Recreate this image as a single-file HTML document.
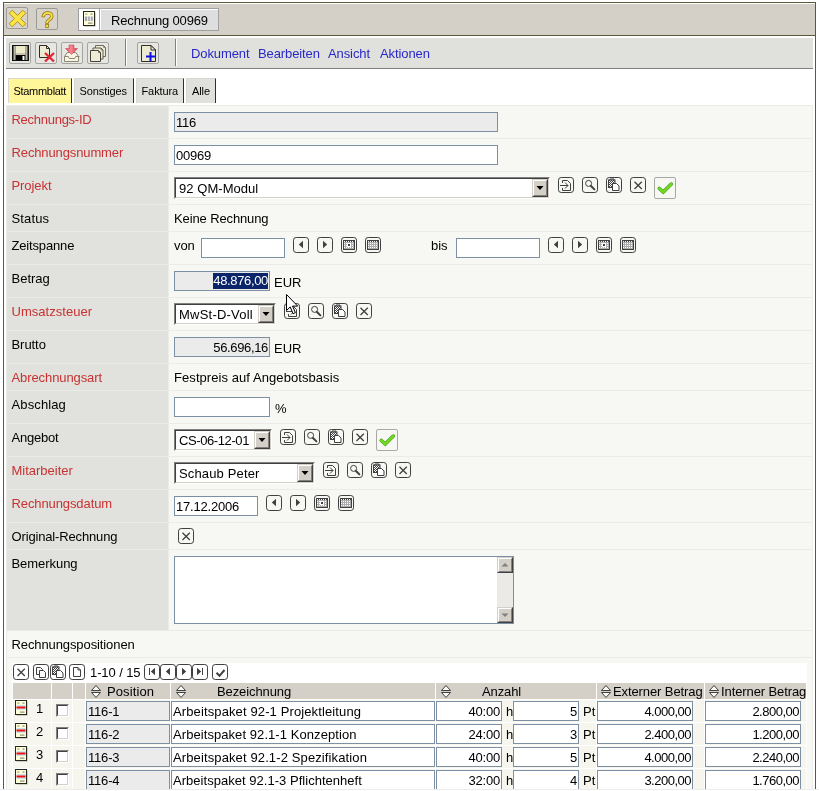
<!DOCTYPE html>
<html lang="de"><head><meta charset="utf-8"><title>Rechnung 00969</title>
<style>
html,body{margin:0;padding:0;background:#fff;}
body{width:819px;height:791px;overflow:hidden;position:relative;font-family:"Liberation Sans",sans-serif;font-size:13px;color:#000;}
div,svg{position:absolute;box-sizing:border-box;}
svg{overflow:visible;}
.t{white-space:nowrap;}
</style></head><body><div id="w" style="left:0;top:0;width:819px;height:791px;will-change:transform">
<svg width="0" height="0" style="left:0;top:0"><defs>
<pattern id="dz" width="2" height="2" patternUnits="userSpaceOnUse"><rect width="2" height="2" fill="#fff"/><rect width="1" height="1" fill="#404040"/><rect x="1" y="1" width="1" height="1" fill="#404040"/></pattern>
<pattern id="cg" x="3.500" y="4.500" width="2" height="2" patternUnits="userSpaceOnUse"><rect width="2" height="2" fill="#404040"/><rect x=".5" y=".5" width="1" height="1" fill="#fff"/></pattern>
</defs></svg>
<div style="left:3px;top:2px;width:813px;height:787px;border:1px solid #5a583e;border-bottom:none;background:#fff"></div>
<div style="left:0px;top:789px;width:819px;height:1px;background:#e4e4e4;"></div>
<div style="left:4px;top:3px;width:811px;height:32px;background:#d4d0c8;border-top:1px solid #fff;"></div>
<div style="left:4px;top:35px;width:811px;height:1px;background:#5a583e;"></div>
<div style="left:6px;top:7px;width:22px;height:22px;border:1px solid #9c9a96;border-radius:2px;background:#d8d4cc;"></div>
<svg style="left:6px;top:7px" width="22" height="22" viewBox="0 0 22 22"><defs><linearGradient id="yg" x1="0" y1="0" x2="1" y2="1"><stop offset="0" stop-color="#fdea5a"/><stop offset=".55" stop-color="#fbe040"/><stop offset="1" stop-color="#f8c820"/></linearGradient></defs><path d="M-9.6 -2.2 L-2.2 -2.2 L-2.2 -9.6 L2.2 -9.6 L2.2 -2.2 L9.6 -2.2 L9.6 2.2 L2.2 2.2 L2.2 9.6 L-2.2 9.6 L-2.2 2.2 L-9.6 2.2z" transform="translate(11.500 11.500) rotate(45)" fill="#fbe245" stroke="#a8901c" stroke-width=".9"/></svg>
<div style="left:36px;top:8px;width:22px;height:22px;border:1px solid #9c9a96;border-radius:2px;background:#d8d4cc;"></div>
<svg style="left:36px;top:8px" width="22" height="22" viewBox="0 0 22 22"><text x="11.500" y="18.900" text-anchor="middle" font-family="Liberation Sans, sans-serif" font-size="21.500" fill="#fbe04a" stroke="#8a7410" stroke-width="1.500" paint-order="stroke">?</text></svg>
<div style="left:78px;top:8px;width:141px;height:23px;border:1px solid #a0a0a0;background:#fff;"></div>
<div style="left:99px;top:9px;width:1px;height:21px;background:#a0a0a0;"></div>
<div style="left:100px;top:9px;width:118px;height:21px;background:#dedede;border-left:1px solid #fff;border-top:1px solid #fff;"></div>
<svg style="left:83px;top:11px" width="13" height="16" viewBox="0 0 13 16"><rect x="1.500" y="1.500" width="11" height="14" fill="#a8a8a0"/><rect x=".5" y=".5" width="11" height="14" fill="#ffffd8" stroke="#26261c"/><rect x="2" y="2.500" width="2.500" height="1.200" fill="#a8a8a0"/><rect x="7.500" y="2.500" width="2" height="1.200" fill="#808498"/><rect x="1.500" y="5.500" width="9" height="4.500" fill="#e4e4e0"/><rect x="2" y="5.500" width="2" height="4.500" fill="#a8a8b4"/><rect x="5.200" y="5.500" width="1.600" height="4.500" fill="#a8a8b4"/><rect x="8" y="5.500" width="1.700" height="4.500" fill="#a8a8b4"/><rect x="5" y="11.500" width="4.500" height="1.200" fill="#8c8c80"/></svg>
<div class="t" style="top:13px;font-size:13px;line-height:15px;left:111px;letter-spacing:-0.15px;">Rechnung 00969</div>
<div style="left:6px;top:38px;width:807px;height:30px;background:#e0e1dc;"></div>
<div style="left:6px;top:68px;width:807px;height:1px;background:#808080;"></div>
<div style="left:9px;top:42px;width:22px;height:22px;border:1px solid #a4a4a0;border-radius:2px;background:#e6e6e2;"></div>
<div style="left:35px;top:42px;width:22px;height:22px;border:1px solid #a4a4a0;border-radius:2px;background:#e6e6e2;"></div>
<div style="left:61px;top:42px;width:22px;height:22px;border:1px solid #a4a4a0;border-radius:2px;background:#e6e6e2;"></div>
<div style="left:87px;top:42px;width:22px;height:22px;border:1px solid #a4a4a0;border-radius:2px;background:#e6e6e2;"></div>
<div style="left:137px;top:42px;width:22px;height:22px;border:1px solid #a4a4a0;border-radius:2px;background:#e6e6e2;"></div>
<svg style="left:12px;top:45px" width="17" height="16" viewBox="0 0 17 16"><rect x="0" y="0" width="17" height="16" fill="#101010"/><rect x="1.500" y="1" width="2" height="14" fill="#b8b4a4"/><rect x="13.500" y="1" width="2" height="14" fill="#b8b4a4"/><rect x="3.500" y="1" width="10" height="7" fill="#eeeacc"/><rect x="3.500" y="8" width="10" height="2" fill="#c8c4b0"/><rect x="4" y="10.500" width="9" height="4.500" fill="#000"/><rect x="10.500" y="11" width="2" height="4" fill="#fff"/></svg>
<svg style="left:38px;top:44px" width="18" height="19" viewBox="0 0 18 19"><path d="M1.500 1.500h7l3 3v9h-10z" fill="#ecead0" stroke="#302c20"/><path d="M8.500 1.500v3h3" fill="none" stroke="#302c20"/><path d="M7 9l9 8.500M16 9l-9 8.500" stroke="#e02838" stroke-width="2.400"/></svg>
<svg style="left:63px;top:44px" width="18" height="19" viewBox="0 0 18 19"><defs><linearGradient id="rg" x1="0" y1="0" x2="1" y2="0"><stop offset="0" stop-color="#e84a5a"/><stop offset=".45" stop-color="#f28a94"/><stop offset="1" stop-color="#e03a4c"/></linearGradient></defs><path d="M1.500 17.500v-5l2.800-4h8.400l2.800 4v5z" fill="#f6f4e4" stroke="#8a8670"/><path d="M1.500 12.500h3.800l1 2h5.400l1-2h3.800" fill="none" stroke="#8a8670"/><path d="M6 1h5v3.500h3.500l-6 6-6-6h3.500z" fill="url(#rg)" stroke="#d03044" stroke-width=".5"/></svg>
<svg style="left:90px;top:44px" width="18" height="19" viewBox="0 0 18 19"><path d="M5.5 1.5h8l2 2v9h-10z" fill="#eeecd4" stroke="#6e6a5a"/><path d="M13.5 1.5v2h2" fill="none" stroke="#6e6a5a" stroke-width=".7"/><path d="M3 4h8l2 2v9h-10z" fill="#eeecd4" stroke="#5e5a4a"/><path d="M11 4v2h2" fill="none" stroke="#5e5a4a" stroke-width=".7"/><path d="M0.5 6.5h8l2 2v9h-10z" fill="#eeecd4" stroke="#46423a"/><path d="M8.5 6.5v2h2" fill="none" stroke="#46423a" stroke-width=".7"/></svg>
<svg style="left:141px;top:45px" width="16" height="18" viewBox="0 0 16 18"><path d="M.5 .5h9.500l4.500 4.500v11.500h-14z" fill="#ecead0" stroke="#302c20"/><path d="M10 .5v4.500h4.500z" fill="#f8f8f0" stroke="#302c20" stroke-linejoin="bevel"/><path d="M5 11.500h9.500M9.500 7v9.500" stroke="#1010e0" stroke-width="2"/></svg>
<div style="left:125px;top:39px;width:1px;height:27px;background:#808080;"></div>
<div style="left:126px;top:39px;width:1px;height:27px;background:#fff;"></div>
<div style="left:175px;top:39px;width:1px;height:27px;background:#808080;"></div>
<div style="left:176px;top:39px;width:1px;height:27px;background:#fff;"></div>
<div class="t" style="top:46px;font-size:13px;line-height:15px;left:191px;color:#2828c8;letter-spacing:-0.1px;">Dokument</div>
<div class="t" style="top:46px;font-size:13px;line-height:15px;left:258px;color:#2828c8;letter-spacing:-0.1px;">Bearbeiten</div>
<div class="t" style="top:46px;font-size:13px;line-height:15px;left:328px;color:#2828c8;letter-spacing:-0.1px;">Ansicht</div>
<div class="t" style="top:46px;font-size:13px;line-height:15px;left:380px;color:#2828c8;letter-spacing:-0.1px;">Aktionen</div>
<div style="left:8px;top:78px;width:64px;height:25px;background:#fff599;border-left:1px solid #d8d8d0;border-top:1px solid #d8d8d0;border-right:1px solid #303030;"></div>
<div class="t" style="top:85px;font-size:11px;line-height:13px;left:13.5px;letter-spacing:-0.3px;">Stammblatt</div>
<div style="left:74px;top:78px;width:60px;height:25px;background:#e0e0dc;border-left:1px solid #d8d8d0;border-top:1px solid #d8d8d0;border-right:1px solid #303030;"></div>
<div class="t" style="top:85px;font-size:11px;line-height:13px;left:79.5px;letter-spacing:-0.1px;">Sonstiges</div>
<div style="left:136px;top:78px;width:48px;height:25px;background:#e0e0dc;border-left:1px solid #d8d8d0;border-top:1px solid #d8d8d0;border-right:1px solid #303030;"></div>
<div class="t" style="top:85px;font-size:11px;line-height:13px;left:141.5px;letter-spacing:-0.1px;">Faktura</div>
<div style="left:186px;top:78px;width:30px;height:25px;background:#e0e0dc;border-left:1px solid #d8d8d0;border-top:1px solid #d8d8d0;border-right:1px solid #303030;"></div>
<div class="t" style="top:85px;font-size:11px;line-height:13px;left:192px;letter-spacing:-0.1px;">Alle</div>
<div style="left:6px;top:105px;width:807px;height:684px;background:#ebebe8;"></div>
<div style="left:7px;top:106px;width:161px;height:32px;background:#e1e1dd;"></div>
<div style="left:169px;top:106px;width:643px;height:32px;background:#f7f7f3;"></div>
<div class="t" style="top:112px;font-size:13px;line-height:15px;left:11.5px;color:#c83232;letter-spacing:-0.27px;">Rechnungs-ID</div>
<div style="left:7px;top:139px;width:161px;height:32px;background:#e1e1dd;"></div>
<div style="left:169px;top:139px;width:643px;height:32px;background:#f7f7f3;"></div>
<div class="t" style="top:145px;font-size:13px;line-height:15px;left:11.5px;color:#c83232;letter-spacing:-0.12px;">Rechnungsnummer</div>
<div style="left:7px;top:172px;width:161px;height:32px;background:#e1e1dd;"></div>
<div style="left:169px;top:172px;width:643px;height:32px;background:#f7f7f3;"></div>
<div class="t" style="top:178px;font-size:13px;line-height:15px;left:11.5px;color:#c83232;letter-spacing:-0.07px;">Projekt</div>
<div style="left:7px;top:205px;width:161px;height:26px;background:#e1e1dd;"></div>
<div style="left:169px;top:205px;width:643px;height:26px;background:#f7f7f3;"></div>
<div class="t" style="top:211px;font-size:13px;line-height:15px;left:11.5px;color:#000;letter-spacing:0.14px;">Status</div>
<div style="left:7px;top:232px;width:161px;height:32px;background:#e1e1dd;"></div>
<div style="left:169px;top:232px;width:643px;height:32px;background:#f7f7f3;"></div>
<div class="t" style="top:238px;font-size:13px;line-height:15px;left:11.5px;color:#000;letter-spacing:-0.16px;">Zeitspanne</div>
<div style="left:7px;top:265px;width:161px;height:32px;background:#e1e1dd;"></div>
<div style="left:169px;top:265px;width:643px;height:32px;background:#f7f7f3;"></div>
<div class="t" style="top:271px;font-size:13px;line-height:15px;left:11.5px;color:#000;letter-spacing:0px;">Betrag</div>
<div style="left:7px;top:298px;width:161px;height:32px;background:#e1e1dd;"></div>
<div style="left:169px;top:298px;width:643px;height:32px;background:#f7f7f3;"></div>
<div class="t" style="top:304px;font-size:13px;line-height:15px;left:11.5px;color:#c83232;letter-spacing:0.04px;">Umsatzsteuer</div>
<div style="left:7px;top:331px;width:161px;height:32px;background:#e1e1dd;"></div>
<div style="left:169px;top:331px;width:643px;height:32px;background:#f7f7f3;"></div>
<div class="t" style="top:337px;font-size:13px;line-height:15px;left:11.5px;color:#000;letter-spacing:-0.06px;">Brutto</div>
<div style="left:7px;top:364px;width:161px;height:26px;background:#e1e1dd;"></div>
<div style="left:169px;top:364px;width:643px;height:26px;background:#f7f7f3;"></div>
<div class="t" style="top:370px;font-size:13px;line-height:15px;left:11.5px;color:#c83232;letter-spacing:-0.09px;">Abrechnungsart</div>
<div style="left:7px;top:391px;width:161px;height:32px;background:#e1e1dd;"></div>
<div style="left:169px;top:391px;width:643px;height:32px;background:#f7f7f3;"></div>
<div class="t" style="top:397px;font-size:13px;line-height:15px;left:11.5px;color:#000;letter-spacing:0.12px;">Abschlag</div>
<div style="left:7px;top:424px;width:161px;height:32px;background:#e1e1dd;"></div>
<div style="left:169px;top:424px;width:643px;height:32px;background:#f7f7f3;"></div>
<div class="t" style="top:430px;font-size:13px;line-height:15px;left:11.5px;color:#000;letter-spacing:-0.22px;">Angebot</div>
<div style="left:7px;top:457px;width:161px;height:32px;background:#e1e1dd;"></div>
<div style="left:169px;top:457px;width:643px;height:32px;background:#f7f7f3;"></div>
<div class="t" style="top:463px;font-size:13px;line-height:15px;left:11.5px;color:#c83232;letter-spacing:-0.01px;">Mitarbeiter</div>
<div style="left:7px;top:490px;width:161px;height:32px;background:#e1e1dd;"></div>
<div style="left:169px;top:490px;width:643px;height:32px;background:#f7f7f3;"></div>
<div class="t" style="top:496px;font-size:13px;line-height:15px;left:11.5px;color:#c83232;letter-spacing:-0.1px;">Rechnungsdatum</div>
<div style="left:7px;top:523px;width:161px;height:26px;background:#e1e1dd;"></div>
<div style="left:169px;top:523px;width:643px;height:26px;background:#f7f7f3;"></div>
<div class="t" style="top:529px;font-size:13px;line-height:15px;left:11.5px;color:#000;letter-spacing:-0.15px;">Original-Rechnung</div>
<div style="left:7px;top:550px;width:161px;height:80px;background:#e1e1dd;"></div>
<div style="left:169px;top:550px;width:643px;height:80px;background:#f7f7f3;"></div>
<div class="t" style="top:556px;font-size:13px;line-height:15px;left:11.5px;color:#000;letter-spacing:-0.05px;">Bemerkung</div>
<div style="left:7px;top:631px;width:805px;height:26px;background:#f7f7f3;"></div>
<div class="t" style="top:637px;font-size:13px;line-height:15px;left:11.5px;letter-spacing:-0.1px;">Rechnungspositionen</div>
<div style="left:7px;top:658px;width:805px;height:131px;background:#f7f7f3;"></div>
<div style="left:174px;top:112px;width:324px;height:20px;border:1px solid #7c8fa3;background:#ebebeb;"></div>
<div class="t" style="top:115px;font-size:13px;line-height:15px;left:176px;letter-spacing:-0.2px;">116</div>
<div style="left:174px;top:145px;width:324px;height:20px;border:1px solid #7c8fa3;background:#fff;"></div>
<div class="t" style="top:148px;font-size:13px;line-height:15px;left:176px;letter-spacing:-0.2px;">00969</div>
<div style="left:174px;top:177px;width:376px;height:22px;border:1px solid;border-color:#808080 #fff #fff #808080;background:#fff;"></div>
<div style="left:175px;top:178px;width:374px;height:20px;border:1px solid;border-color:#404040 #d4d0c8 #d4d0c8 #404040;"></div>
<div style="left:532px;top:179px;width:16px;height:18px;border:1px solid;border-color:#d4d0c8 #404040 #404040 #d4d0c8;background:#d4d0c8;"></div>
<div style="left:533px;top:180px;width:14px;height:16px;border:1px solid;border-color:#fff #808080 #808080 #fff;"></div>
<svg style="left:532px;top:179px" width="16" height="18" viewBox="0 0 16 18"><path d="M4.500 7h7l-3.500 4z" fill="#000"/></svg>
<div class="t" style="top:181px;font-size:13px;line-height:15px;left:179px;letter-spacing:0.05px;">92 QM-Modul</div>
<svg style="left:558px;top:177px" width="16" height="16" viewBox="0 0 16 16"><path d="M3.200 .5h9.600q2.700 0 2.700 2.700v9.600q0 2.700-2.700 2.700h-9.600q-2.700 0-2.700-2.700v-9.600q0-2.700 2.700-2.700z" fill="none" stroke="#404040"/><path d="M4.5 6V3.5h5l3 3v7h-8V11" fill="none" stroke="#404040"/><path d="M2 8.5h8M7 5.5l3 3-3 3" fill="none" stroke="#404040"/></svg>
<svg style="left:582px;top:177px" width="16" height="16" viewBox="0 0 16 16"><path d="M3.200 .5h9.600q2.700 0 2.700 2.700v9.600q0 2.700-2.700 2.700h-9.600q-2.700 0-2.700-2.700v-9.600q0-2.700 2.700-2.700z" fill="none" stroke="#404040"/><circle cx="6.6" cy="6.4" r="3" fill="none" stroke="#404040"/><path d="M9 9l3.4 3.4" stroke="#404040" stroke-width="2" stroke-linecap="round"/></svg>
<svg style="left:606px;top:177px" width="16" height="16" viewBox="0 0 16 16"><path d="M3.200 .5h9.600q2.700 0 2.700 2.700v9.600q0 2.700-2.700 2.700h-9.600q-2.700 0-2.700-2.700v-9.600q0-2.700 2.700-2.700z" fill="none" stroke="#404040"/><rect x="2.5" y="3" width="6.5" height="7.5" fill="url(#dz)" stroke="#404040"/><path d="M4 3V2h4v1" fill="none" stroke="#404040"/><path d="M6.5 6.5h4l2.500 2.500v4.500h-6.500z" fill="#fff" stroke="#404040"/></svg>
<svg style="left:630px;top:177px" width="16" height="16" viewBox="0 0 16 16"><path d="M3.200 .5h9.600q2.700 0 2.700 2.700v9.600q0 2.700-2.700 2.700h-9.600q-2.700 0-2.700-2.700v-9.600q0-2.700 2.700-2.700z" fill="none" stroke="#404040"/><path d="M4.500 4.800l7.300 7.200M11.800 4.800l-7.300 7.200" stroke="#404040" stroke-width="1.300"/></svg>
<div style="left:654px;top:177px;width:22px;height:22px;border:1px solid #a8a8a4;border-radius:2px;background:#f7f7f3;"></div>
<svg style="left:654px;top:177px" width="22" height="22" viewBox="0 0 22 22"><path d="M5.300 11.500l4 3.600 8-8" fill="none" stroke="#4a9a18" stroke-width="3.600" stroke-linecap="round" stroke-linejoin="miter"/><path d="M5.300 11.500l4 3.600 8-8" fill="none" stroke="#6fdc22" stroke-width="2.400" stroke-linecap="round"/></svg>
<div class="t" style="top:211px;font-size:13px;line-height:15px;left:174px;letter-spacing:-0.12px;">Keine Rechnung</div>
<div class="t" style="top:238px;font-size:13px;line-height:15px;left:174px;letter-spacing:-0.12px;">von</div>
<div style="left:201px;top:238px;width:84px;height:20px;border:1px solid #7c8fa3;background:#fff;"></div>
<svg style="left:293px;top:237px" width="16" height="16" viewBox="0 0 16 16"><path d="M3.200 .5h9.600q2.700 0 2.700 2.700v9.600q0 2.700-2.700 2.700h-9.600q-2.700 0-2.700-2.700v-9.600q0-2.700 2.700-2.700z" fill="none" stroke="#404040"/><path d="M5.800 7.500l4.200-3.800v7.600z" fill="#404040"/></svg>
<svg style="left:317px;top:237px" width="16" height="16" viewBox="0 0 16 16"><path d="M3.200 .5h9.600q2.700 0 2.700 2.700v9.600q0 2.700-2.700 2.700h-9.600q-2.700 0-2.700-2.700v-9.600q0-2.700 2.700-2.700z" fill="none" stroke="#404040"/><path d="M10.200 7.500l-4.200-3.800v7.600z" fill="#404040"/></svg>
<svg style="left:341px;top:237px" width="16" height="16" viewBox="0 0 16 16"><path d="M3.200 .5h9.600q2.700 0 2.700 2.700v9.600q0 2.700-2.700 2.700h-9.600q-2.700 0-2.700-2.700v-9.600q0-2.700 2.700-2.700z" fill="none" stroke="#404040"/><rect x="2" y="3" width="12" height="10" fill="#404040"/><rect x="3" y="5" width="10" height="7" fill="#acacac"/><rect x="3" y="4" width="1" height="1" fill="#fff"/><rect x="5" y="4" width="1" height="1" fill="#fff"/><rect x="7" y="4" width="1" height="1" fill="#fff"/><rect x="9" y="4" width="1" height="1" fill="#fff"/><rect x="11" y="4" width="1" height="1" fill="#fff"/><rect x="3" y="6" width="1" height="1" fill="#fff"/><rect x="5" y="6" width="1" height="1" fill="#fff"/><rect x="7" y="6" width="1" height="1" fill="#fff"/><rect x="9" y="6" width="1" height="1" fill="#fff"/><rect x="11" y="6" width="1" height="1" fill="#fff"/><rect x="3" y="8" width="1" height="1" fill="#fff"/><rect x="5" y="8" width="1" height="1" fill="#fff"/><rect x="7" y="8" width="1" height="1" fill="#fff"/><rect x="9" y="8" width="1" height="1" fill="#fff"/><rect x="11" y="8" width="1" height="1" fill="#fff"/><rect x="3" y="10" width="1" height="1" fill="#fff"/><rect x="5" y="10" width="1" height="1" fill="#fff"/><rect x="7" y="10" width="1" height="1" fill="#fff"/><rect x="9" y="10" width="1" height="1" fill="#fff"/><rect x="11" y="10" width="1" height="1" fill="#fff"/><rect x="3" y="12" width="1" height="0" fill="#fff"/><rect x="5" y="12" width="1" height="0" fill="#fff"/><rect x="7" y="12" width="1" height="0" fill="#fff"/><rect x="9" y="12" width="1" height="0" fill="#fff"/><rect x="11" y="12" width="1" height="0" fill="#fff"/><rect x="6" y="6" width="4" height="4" fill="#fff"/><rect x="7" y="7" width="2" height="2" fill="#404040"/></svg>
<svg style="left:365px;top:237px" width="16" height="16" viewBox="0 0 16 16"><path d="M3.200 .5h9.600q2.700 0 2.700 2.700v9.600q0 2.700-2.700 2.700h-9.600q-2.700 0-2.700-2.700v-9.600q0-2.700 2.700-2.700z" fill="none" stroke="#404040"/><rect x="2" y="3" width="12" height="10" fill="#404040"/><rect x="3" y="5" width="10" height="7" fill="#acacac"/><rect x="3" y="4" width="1" height="1" fill="#fff"/><rect x="5" y="4" width="1" height="1" fill="#fff"/><rect x="7" y="4" width="1" height="1" fill="#fff"/><rect x="9" y="4" width="1" height="1" fill="#fff"/><rect x="11" y="4" width="1" height="1" fill="#fff"/><rect x="3" y="6" width="1" height="1" fill="#fff"/><rect x="5" y="6" width="1" height="1" fill="#fff"/><rect x="7" y="6" width="1" height="1" fill="#fff"/><rect x="9" y="6" width="1" height="1" fill="#fff"/><rect x="11" y="6" width="1" height="1" fill="#fff"/><rect x="3" y="8" width="1" height="1" fill="#fff"/><rect x="5" y="8" width="1" height="1" fill="#fff"/><rect x="7" y="8" width="1" height="1" fill="#fff"/><rect x="9" y="8" width="1" height="1" fill="#fff"/><rect x="11" y="8" width="1" height="1" fill="#fff"/><rect x="3" y="10" width="1" height="1" fill="#fff"/><rect x="5" y="10" width="1" height="1" fill="#fff"/><rect x="7" y="10" width="1" height="1" fill="#fff"/><rect x="9" y="10" width="1" height="1" fill="#fff"/><rect x="11" y="10" width="1" height="1" fill="#fff"/><rect x="3" y="12" width="1" height="0" fill="#fff"/><rect x="5" y="12" width="1" height="0" fill="#fff"/><rect x="7" y="12" width="1" height="0" fill="#fff"/><rect x="9" y="12" width="1" height="0" fill="#fff"/><rect x="11" y="12" width="1" height="0" fill="#fff"/></svg>
<div class="t" style="top:238px;font-size:13px;line-height:15px;left:431px;letter-spacing:0px;">bis</div>
<div style="left:456px;top:238px;width:84px;height:20px;border:1px solid #7c8fa3;background:#fff;"></div>
<svg style="left:548px;top:237px" width="16" height="16" viewBox="0 0 16 16"><path d="M3.200 .5h9.600q2.700 0 2.700 2.700v9.600q0 2.700-2.700 2.700h-9.600q-2.700 0-2.700-2.700v-9.600q0-2.700 2.700-2.700z" fill="none" stroke="#404040"/><path d="M5.800 7.500l4.200-3.800v7.600z" fill="#404040"/></svg>
<svg style="left:572px;top:237px" width="16" height="16" viewBox="0 0 16 16"><path d="M3.200 .5h9.600q2.700 0 2.700 2.700v9.600q0 2.700-2.700 2.700h-9.600q-2.700 0-2.700-2.700v-9.600q0-2.700 2.700-2.700z" fill="none" stroke="#404040"/><path d="M10.200 7.500l-4.200-3.800v7.600z" fill="#404040"/></svg>
<svg style="left:596px;top:237px" width="16" height="16" viewBox="0 0 16 16"><path d="M3.200 .5h9.600q2.700 0 2.700 2.700v9.600q0 2.700-2.700 2.700h-9.600q-2.700 0-2.700-2.700v-9.600q0-2.700 2.700-2.700z" fill="none" stroke="#404040"/><rect x="2" y="3" width="12" height="10" fill="#404040"/><rect x="3" y="5" width="10" height="7" fill="#acacac"/><rect x="3" y="4" width="1" height="1" fill="#fff"/><rect x="5" y="4" width="1" height="1" fill="#fff"/><rect x="7" y="4" width="1" height="1" fill="#fff"/><rect x="9" y="4" width="1" height="1" fill="#fff"/><rect x="11" y="4" width="1" height="1" fill="#fff"/><rect x="3" y="6" width="1" height="1" fill="#fff"/><rect x="5" y="6" width="1" height="1" fill="#fff"/><rect x="7" y="6" width="1" height="1" fill="#fff"/><rect x="9" y="6" width="1" height="1" fill="#fff"/><rect x="11" y="6" width="1" height="1" fill="#fff"/><rect x="3" y="8" width="1" height="1" fill="#fff"/><rect x="5" y="8" width="1" height="1" fill="#fff"/><rect x="7" y="8" width="1" height="1" fill="#fff"/><rect x="9" y="8" width="1" height="1" fill="#fff"/><rect x="11" y="8" width="1" height="1" fill="#fff"/><rect x="3" y="10" width="1" height="1" fill="#fff"/><rect x="5" y="10" width="1" height="1" fill="#fff"/><rect x="7" y="10" width="1" height="1" fill="#fff"/><rect x="9" y="10" width="1" height="1" fill="#fff"/><rect x="11" y="10" width="1" height="1" fill="#fff"/><rect x="3" y="12" width="1" height="0" fill="#fff"/><rect x="5" y="12" width="1" height="0" fill="#fff"/><rect x="7" y="12" width="1" height="0" fill="#fff"/><rect x="9" y="12" width="1" height="0" fill="#fff"/><rect x="11" y="12" width="1" height="0" fill="#fff"/><rect x="6" y="6" width="4" height="4" fill="#fff"/><rect x="7" y="7" width="2" height="2" fill="#404040"/></svg>
<svg style="left:620px;top:237px" width="16" height="16" viewBox="0 0 16 16"><path d="M3.200 .5h9.600q2.700 0 2.700 2.700v9.600q0 2.700-2.700 2.700h-9.600q-2.700 0-2.700-2.700v-9.600q0-2.700 2.700-2.700z" fill="none" stroke="#404040"/><rect x="2" y="3" width="12" height="10" fill="#404040"/><rect x="3" y="5" width="10" height="7" fill="#acacac"/><rect x="3" y="4" width="1" height="1" fill="#fff"/><rect x="5" y="4" width="1" height="1" fill="#fff"/><rect x="7" y="4" width="1" height="1" fill="#fff"/><rect x="9" y="4" width="1" height="1" fill="#fff"/><rect x="11" y="4" width="1" height="1" fill="#fff"/><rect x="3" y="6" width="1" height="1" fill="#fff"/><rect x="5" y="6" width="1" height="1" fill="#fff"/><rect x="7" y="6" width="1" height="1" fill="#fff"/><rect x="9" y="6" width="1" height="1" fill="#fff"/><rect x="11" y="6" width="1" height="1" fill="#fff"/><rect x="3" y="8" width="1" height="1" fill="#fff"/><rect x="5" y="8" width="1" height="1" fill="#fff"/><rect x="7" y="8" width="1" height="1" fill="#fff"/><rect x="9" y="8" width="1" height="1" fill="#fff"/><rect x="11" y="8" width="1" height="1" fill="#fff"/><rect x="3" y="10" width="1" height="1" fill="#fff"/><rect x="5" y="10" width="1" height="1" fill="#fff"/><rect x="7" y="10" width="1" height="1" fill="#fff"/><rect x="9" y="10" width="1" height="1" fill="#fff"/><rect x="11" y="10" width="1" height="1" fill="#fff"/><rect x="3" y="12" width="1" height="0" fill="#fff"/><rect x="5" y="12" width="1" height="0" fill="#fff"/><rect x="7" y="12" width="1" height="0" fill="#fff"/><rect x="9" y="12" width="1" height="0" fill="#fff"/><rect x="11" y="12" width="1" height="0" fill="#fff"/></svg>
<div style="left:174px;top:271px;width:96px;height:20px;border:1px solid #7c8fa3;background:#ebebeb;"></div>
<div class="t" style="right:551px;top:273px;height:16px;line-height:16px;font-size:13px;background:#0a246a;color:#fff;padding:0 0 0 0;letter-spacing:-0.350px">48.876,00</div>
<div class="t" style="top:275px;font-size:13px;line-height:15px;left:274px;letter-spacing:0px;">EUR</div>
<div style="left:174px;top:303px;width:102px;height:22px;border:1px solid;border-color:#808080 #fff #fff #808080;background:#fff;"></div>
<div style="left:175px;top:304px;width:100px;height:20px;border:1px solid;border-color:#404040 #d4d0c8 #d4d0c8 #404040;"></div>
<div style="left:258px;top:305px;width:16px;height:18px;border:1px solid;border-color:#d4d0c8 #404040 #404040 #d4d0c8;background:#d4d0c8;"></div>
<div style="left:259px;top:306px;width:14px;height:16px;border:1px solid;border-color:#fff #808080 #808080 #fff;"></div>
<svg style="left:258px;top:305px" width="16" height="18" viewBox="0 0 16 18"><path d="M4.500 7h7l-3.500 4z" fill="#000"/></svg>
<div class="t" style="top:307px;font-size:13px;line-height:15px;left:179px;letter-spacing:0.22px;">MwSt-D-Voll</div>
<svg style="left:284px;top:303px" width="16" height="16" viewBox="0 0 16 16"><path d="M3.200 .5h9.600q2.700 0 2.700 2.700v9.600q0 2.700-2.700 2.700h-9.600q-2.700 0-2.700-2.700v-9.600q0-2.700 2.700-2.700z" fill="none" stroke="#404040"/><path d="M4.5 6V3.5h5l3 3v7h-8V11" fill="none" stroke="#404040"/><path d="M2 8.5h8M7 5.5l3 3-3 3" fill="none" stroke="#404040"/></svg>
<svg style="left:308px;top:303px" width="16" height="16" viewBox="0 0 16 16"><path d="M3.200 .5h9.600q2.700 0 2.700 2.700v9.600q0 2.700-2.700 2.700h-9.600q-2.700 0-2.700-2.700v-9.600q0-2.700 2.700-2.700z" fill="none" stroke="#404040"/><circle cx="6.6" cy="6.4" r="3" fill="none" stroke="#404040"/><path d="M9 9l3.4 3.4" stroke="#404040" stroke-width="2" stroke-linecap="round"/></svg>
<svg style="left:332px;top:303px" width="16" height="16" viewBox="0 0 16 16"><path d="M3.200 .5h9.600q2.700 0 2.700 2.700v9.600q0 2.700-2.700 2.700h-9.600q-2.700 0-2.700-2.700v-9.600q0-2.700 2.700-2.700z" fill="none" stroke="#404040"/><rect x="2.5" y="3" width="6.5" height="7.5" fill="url(#dz)" stroke="#404040"/><path d="M4 3V2h4v1" fill="none" stroke="#404040"/><path d="M6.5 6.5h4l2.500 2.500v4.500h-6.500z" fill="#fff" stroke="#404040"/></svg>
<svg style="left:356px;top:303px" width="16" height="16" viewBox="0 0 16 16"><path d="M3.200 .5h9.600q2.700 0 2.700 2.700v9.600q0 2.700-2.700 2.700h-9.600q-2.700 0-2.700-2.700v-9.600q0-2.700 2.700-2.700z" fill="none" stroke="#404040"/><path d="M4.500 4.800l7.300 7.200M11.800 4.800l-7.300 7.200" stroke="#404040" stroke-width="1.300"/></svg>
<div style="left:174px;top:337px;width:96px;height:20px;border:1px solid #7c8fa3;background:#ebebeb;"></div>
<div class="t" style="top:340px;font-size:13px;line-height:15px;right:551px;letter-spacing:-0.35px;">56.696,16</div>
<div class="t" style="top:341px;font-size:13px;line-height:15px;left:274px;letter-spacing:0px;">EUR</div>
<div class="t" style="top:370px;font-size:13px;line-height:15px;left:174px;letter-spacing:0.07px;">Festpreis auf Angebotsbasis</div>
<div style="left:174px;top:397px;width:96px;height:20px;border:1px solid #7c8fa3;background:#fff;"></div>
<div class="t" style="top:401px;font-size:13px;line-height:15px;left:275px;letter-spacing:-0.12px;">%</div>
<div style="left:174px;top:429px;width:98px;height:22px;border:1px solid;border-color:#808080 #fff #fff #808080;background:#fff;"></div>
<div style="left:175px;top:430px;width:96px;height:20px;border:1px solid;border-color:#404040 #d4d0c8 #d4d0c8 #404040;"></div>
<div style="left:254px;top:431px;width:16px;height:18px;border:1px solid;border-color:#d4d0c8 #404040 #404040 #d4d0c8;background:#d4d0c8;"></div>
<div style="left:255px;top:432px;width:14px;height:16px;border:1px solid;border-color:#fff #808080 #808080 #fff;"></div>
<svg style="left:254px;top:431px" width="16" height="18" viewBox="0 0 16 18"><path d="M4.500 7h7l-3.500 4z" fill="#000"/></svg>
<div class="t" style="top:433px;font-size:13px;line-height:15px;left:179px;letter-spacing:-0.4px;">CS-06-12-01</div>
<svg style="left:280px;top:429px" width="16" height="16" viewBox="0 0 16 16"><path d="M3.200 .5h9.600q2.700 0 2.700 2.700v9.600q0 2.700-2.700 2.700h-9.600q-2.700 0-2.700-2.700v-9.600q0-2.700 2.700-2.700z" fill="none" stroke="#404040"/><path d="M4.5 6V3.5h5l3 3v7h-8V11" fill="none" stroke="#404040"/><path d="M2 8.5h8M7 5.5l3 3-3 3" fill="none" stroke="#404040"/></svg>
<svg style="left:304px;top:429px" width="16" height="16" viewBox="0 0 16 16"><path d="M3.200 .5h9.600q2.700 0 2.700 2.700v9.600q0 2.700-2.700 2.700h-9.600q-2.700 0-2.700-2.700v-9.600q0-2.700 2.700-2.700z" fill="none" stroke="#404040"/><circle cx="6.6" cy="6.4" r="3" fill="none" stroke="#404040"/><path d="M9 9l3.4 3.4" stroke="#404040" stroke-width="2" stroke-linecap="round"/></svg>
<svg style="left:328px;top:429px" width="16" height="16" viewBox="0 0 16 16"><path d="M3.200 .5h9.600q2.700 0 2.700 2.700v9.600q0 2.700-2.700 2.700h-9.600q-2.700 0-2.700-2.700v-9.600q0-2.700 2.700-2.700z" fill="none" stroke="#404040"/><rect x="2.5" y="3" width="6.5" height="7.5" fill="url(#dz)" stroke="#404040"/><path d="M4 3V2h4v1" fill="none" stroke="#404040"/><path d="M6.5 6.5h4l2.500 2.500v4.500h-6.500z" fill="#fff" stroke="#404040"/></svg>
<svg style="left:352px;top:429px" width="16" height="16" viewBox="0 0 16 16"><path d="M3.200 .5h9.600q2.700 0 2.700 2.700v9.600q0 2.700-2.700 2.700h-9.600q-2.700 0-2.700-2.700v-9.600q0-2.700 2.700-2.700z" fill="none" stroke="#404040"/><path d="M4.500 4.800l7.300 7.200M11.800 4.800l-7.300 7.200" stroke="#404040" stroke-width="1.300"/></svg>
<div style="left:376px;top:429px;width:22px;height:22px;border:1px solid #a8a8a4;border-radius:2px;background:#f7f7f3;"></div>
<svg style="left:376px;top:429px" width="22" height="22" viewBox="0 0 22 22"><path d="M5.300 11.500l4 3.600 8-8" fill="none" stroke="#4a9a18" stroke-width="3.600" stroke-linecap="round" stroke-linejoin="miter"/><path d="M5.300 11.500l4 3.600 8-8" fill="none" stroke="#6fdc22" stroke-width="2.400" stroke-linecap="round"/></svg>
<div style="left:174px;top:462px;width:141px;height:22px;border:1px solid;border-color:#808080 #fff #fff #808080;background:#fff;"></div>
<div style="left:175px;top:463px;width:139px;height:20px;border:1px solid;border-color:#404040 #d4d0c8 #d4d0c8 #404040;"></div>
<div style="left:297px;top:464px;width:16px;height:18px;border:1px solid;border-color:#d4d0c8 #404040 #404040 #d4d0c8;background:#d4d0c8;"></div>
<div style="left:298px;top:465px;width:14px;height:16px;border:1px solid;border-color:#fff #808080 #808080 #fff;"></div>
<svg style="left:297px;top:464px" width="16" height="18" viewBox="0 0 16 18"><path d="M4.500 7h7l-3.500 4z" fill="#000"/></svg>
<div class="t" style="top:466px;font-size:13px;line-height:15px;left:179px;letter-spacing:0.15px;">Schaub Peter</div>
<svg style="left:323px;top:462px" width="16" height="16" viewBox="0 0 16 16"><path d="M3.200 .5h9.600q2.700 0 2.700 2.700v9.600q0 2.700-2.700 2.700h-9.600q-2.700 0-2.700-2.700v-9.600q0-2.700 2.700-2.700z" fill="none" stroke="#404040"/><path d="M4.5 6V3.5h5l3 3v7h-8V11" fill="none" stroke="#404040"/><path d="M2 8.5h8M7 5.5l3 3-3 3" fill="none" stroke="#404040"/></svg>
<svg style="left:347px;top:462px" width="16" height="16" viewBox="0 0 16 16"><path d="M3.200 .5h9.600q2.700 0 2.700 2.700v9.600q0 2.700-2.700 2.700h-9.600q-2.700 0-2.700-2.700v-9.600q0-2.700 2.700-2.700z" fill="none" stroke="#404040"/><circle cx="6.6" cy="6.4" r="3" fill="none" stroke="#404040"/><path d="M9 9l3.4 3.4" stroke="#404040" stroke-width="2" stroke-linecap="round"/></svg>
<svg style="left:371px;top:462px" width="16" height="16" viewBox="0 0 16 16"><path d="M3.200 .5h9.600q2.700 0 2.700 2.700v9.600q0 2.700-2.700 2.700h-9.600q-2.700 0-2.700-2.700v-9.600q0-2.700 2.700-2.700z" fill="none" stroke="#404040"/><rect x="2.5" y="3" width="6.5" height="7.5" fill="url(#dz)" stroke="#404040"/><path d="M4 3V2h4v1" fill="none" stroke="#404040"/><path d="M6.5 6.5h4l2.500 2.500v4.500h-6.500z" fill="#fff" stroke="#404040"/></svg>
<svg style="left:395px;top:462px" width="16" height="16" viewBox="0 0 16 16"><path d="M3.200 .5h9.600q2.700 0 2.700 2.700v9.600q0 2.700-2.700 2.700h-9.600q-2.700 0-2.700-2.700v-9.600q0-2.700 2.700-2.700z" fill="none" stroke="#404040"/><path d="M4.500 4.800l7.300 7.200M11.800 4.800l-7.300 7.200" stroke="#404040" stroke-width="1.300"/></svg>
<div style="left:174px;top:496px;width:84px;height:20px;border:1px solid #7c8fa3;background:#fff;"></div>
<div class="t" style="top:499px;font-size:13px;line-height:15px;left:176px;letter-spacing:-0.2px;">17.12.2006</div>
<svg style="left:266px;top:495px" width="16" height="16" viewBox="0 0 16 16"><path d="M3.200 .5h9.600q2.700 0 2.700 2.700v9.600q0 2.700-2.700 2.700h-9.600q-2.700 0-2.700-2.700v-9.600q0-2.700 2.700-2.700z" fill="none" stroke="#404040"/><path d="M5.800 7.500l4.200-3.800v7.600z" fill="#404040"/></svg>
<svg style="left:290px;top:495px" width="16" height="16" viewBox="0 0 16 16"><path d="M3.200 .5h9.600q2.700 0 2.700 2.700v9.600q0 2.700-2.700 2.700h-9.600q-2.700 0-2.700-2.700v-9.600q0-2.700 2.700-2.700z" fill="none" stroke="#404040"/><path d="M10.200 7.500l-4.200-3.800v7.600z" fill="#404040"/></svg>
<svg style="left:314px;top:495px" width="16" height="16" viewBox="0 0 16 16"><path d="M3.200 .5h9.600q2.700 0 2.700 2.700v9.600q0 2.700-2.700 2.700h-9.600q-2.700 0-2.700-2.700v-9.600q0-2.700 2.700-2.700z" fill="none" stroke="#404040"/><rect x="2" y="3" width="12" height="10" fill="#404040"/><rect x="3" y="5" width="10" height="7" fill="#acacac"/><rect x="3" y="4" width="1" height="1" fill="#fff"/><rect x="5" y="4" width="1" height="1" fill="#fff"/><rect x="7" y="4" width="1" height="1" fill="#fff"/><rect x="9" y="4" width="1" height="1" fill="#fff"/><rect x="11" y="4" width="1" height="1" fill="#fff"/><rect x="3" y="6" width="1" height="1" fill="#fff"/><rect x="5" y="6" width="1" height="1" fill="#fff"/><rect x="7" y="6" width="1" height="1" fill="#fff"/><rect x="9" y="6" width="1" height="1" fill="#fff"/><rect x="11" y="6" width="1" height="1" fill="#fff"/><rect x="3" y="8" width="1" height="1" fill="#fff"/><rect x="5" y="8" width="1" height="1" fill="#fff"/><rect x="7" y="8" width="1" height="1" fill="#fff"/><rect x="9" y="8" width="1" height="1" fill="#fff"/><rect x="11" y="8" width="1" height="1" fill="#fff"/><rect x="3" y="10" width="1" height="1" fill="#fff"/><rect x="5" y="10" width="1" height="1" fill="#fff"/><rect x="7" y="10" width="1" height="1" fill="#fff"/><rect x="9" y="10" width="1" height="1" fill="#fff"/><rect x="11" y="10" width="1" height="1" fill="#fff"/><rect x="3" y="12" width="1" height="0" fill="#fff"/><rect x="5" y="12" width="1" height="0" fill="#fff"/><rect x="7" y="12" width="1" height="0" fill="#fff"/><rect x="9" y="12" width="1" height="0" fill="#fff"/><rect x="11" y="12" width="1" height="0" fill="#fff"/><rect x="6" y="6" width="4" height="4" fill="#fff"/><rect x="7" y="7" width="2" height="2" fill="#404040"/></svg>
<svg style="left:338px;top:495px" width="16" height="16" viewBox="0 0 16 16"><path d="M3.200 .5h9.600q2.700 0 2.700 2.700v9.600q0 2.700-2.700 2.700h-9.600q-2.700 0-2.700-2.700v-9.600q0-2.700 2.700-2.700z" fill="none" stroke="#404040"/><rect x="2" y="3" width="12" height="10" fill="#404040"/><rect x="3" y="5" width="10" height="7" fill="#acacac"/><rect x="3" y="4" width="1" height="1" fill="#fff"/><rect x="5" y="4" width="1" height="1" fill="#fff"/><rect x="7" y="4" width="1" height="1" fill="#fff"/><rect x="9" y="4" width="1" height="1" fill="#fff"/><rect x="11" y="4" width="1" height="1" fill="#fff"/><rect x="3" y="6" width="1" height="1" fill="#fff"/><rect x="5" y="6" width="1" height="1" fill="#fff"/><rect x="7" y="6" width="1" height="1" fill="#fff"/><rect x="9" y="6" width="1" height="1" fill="#fff"/><rect x="11" y="6" width="1" height="1" fill="#fff"/><rect x="3" y="8" width="1" height="1" fill="#fff"/><rect x="5" y="8" width="1" height="1" fill="#fff"/><rect x="7" y="8" width="1" height="1" fill="#fff"/><rect x="9" y="8" width="1" height="1" fill="#fff"/><rect x="11" y="8" width="1" height="1" fill="#fff"/><rect x="3" y="10" width="1" height="1" fill="#fff"/><rect x="5" y="10" width="1" height="1" fill="#fff"/><rect x="7" y="10" width="1" height="1" fill="#fff"/><rect x="9" y="10" width="1" height="1" fill="#fff"/><rect x="11" y="10" width="1" height="1" fill="#fff"/><rect x="3" y="12" width="1" height="0" fill="#fff"/><rect x="5" y="12" width="1" height="0" fill="#fff"/><rect x="7" y="12" width="1" height="0" fill="#fff"/><rect x="9" y="12" width="1" height="0" fill="#fff"/><rect x="11" y="12" width="1" height="0" fill="#fff"/></svg>
<svg style="left:178px;top:528px" width="16" height="16" viewBox="0 0 16 16"><path d="M3.200 .5h9.600q2.700 0 2.700 2.700v9.600q0 2.700-2.700 2.700h-9.600q-2.700 0-2.700-2.700v-9.600q0-2.700 2.700-2.700z" fill="none" stroke="#404040"/><path d="M4.500 4.800l7.300 7.200M11.800 4.800l-7.300 7.200" stroke="#404040" stroke-width="1.300"/></svg>
<div style="left:174px;top:556px;width:340px;height:68px;border:1px solid #7c8fa3;background:#fff;"></div>
<div style="left:497px;top:557px;width:16px;height:66px;background:#eceae6;"></div>
<div style="left:497px;top:557px;width:16px;height:16px;border:1px solid;border-color:#d4d0c8 #404040 #404040 #d4d0c8;background:#d4d0c8;"></div>
<div style="left:498px;top:558px;width:14px;height:14px;border:1px solid;border-color:#fff #808080 #808080 #fff;"></div>
<svg style="left:497px;top:557px" width="16" height="16" viewBox="0 0 16 16"><path d="M4.500 9.500h7l-3.500-3.500z" fill="#808080"/></svg>
<div style="left:497px;top:607px;width:16px;height:16px;border:1px solid;border-color:#d4d0c8 #404040 #404040 #d4d0c8;background:#d4d0c8;"></div>
<div style="left:498px;top:608px;width:14px;height:14px;border:1px solid;border-color:#fff #808080 #808080 #fff;"></div>
<svg style="left:497px;top:607px" width="16" height="16" viewBox="0 0 16 16"><path d="M4.500 6.500h7l-3.500 3.500z" fill="#808080"/></svg>
<div style="left:12px;top:663px;width:795px;height:126px;background:#fff;"></div>
<svg style="left:13px;top:664px" width="16" height="16" viewBox="0 0 16 16"><path d="M3.200 .5h9.600q2.700 0 2.700 2.700v9.600q0 2.700-2.700 2.700h-9.600q-2.700 0-2.700-2.700v-9.600q0-2.700 2.700-2.700z" fill="none" stroke="#404040"/><path d="M4.500 4.800l7.300 7.200M11.800 4.800l-7.300 7.200" stroke="#404040" stroke-width="1.300"/></svg>
<svg style="left:33px;top:664px" width="16" height="16" viewBox="0 0 16 16"><path d="M3.200 .5h9.600q2.700 0 2.700 2.700v9.600q0 2.700-2.700 2.700h-9.600q-2.700 0-2.700-2.700v-9.600q0-2.700 2.700-2.700z" fill="none" stroke="#404040"/><path d="M3.500 3.500h4l2 2v5h-6z" fill="#fafaf8" stroke="#404040"/><path d="M6.500 6.500h4l2 2v5h-6z" fill="#fafaf8" stroke="#404040"/></svg>
<svg style="left:50px;top:664px" width="16" height="16" viewBox="0 0 16 16"><path d="M3.200 .5h9.600q2.700 0 2.700 2.700v9.600q0 2.700-2.700 2.700h-9.600q-2.700 0-2.700-2.700v-9.600q0-2.700 2.700-2.700z" fill="none" stroke="#404040"/><rect x="2.5" y="3" width="6.5" height="7.5" fill="url(#dz)" stroke="#404040"/><path d="M4 3V2h4v1" fill="none" stroke="#404040"/><path d="M6.5 6.5h4l2.500 2.500v4.500h-6.500z" fill="#fff" stroke="#404040"/></svg>
<svg style="left:69px;top:664px" width="16" height="16" viewBox="0 0 16 16"><path d="M3.200 .5h9.600q2.700 0 2.700 2.700v9.600q0 2.700-2.700 2.700h-9.600q-2.700 0-2.700-2.700v-9.600q0-2.700 2.700-2.700z" fill="none" stroke="#404040"/><path d="M4.500 3.500h4.500l2.500 2.500v6.500h-7z" fill="#fafaf8" stroke="#404040"/><path d="M9 3.500v2.500h2.500" fill="none" stroke="#404040"/></svg>
<div class="t" style="top:665px;font-size:13px;line-height:15px;left:90px;letter-spacing:-0.1px;">1-10 / 15</div>
<svg style="left:144px;top:664px" width="16" height="16" viewBox="0 0 16 16"><path d="M3.200 .5h9.600q2.700 0 2.700 2.700v9.600q0 2.700-2.700 2.700h-9.600q-2.700 0-2.700-2.700v-9.600q0-2.700 2.700-2.700z" fill="none" stroke="#404040"/><path d="M6.800 7.500l4.200-3.800v7.600z" fill="#404040"/><path d="M5.500 4v7" stroke="#404040"/></svg>
<svg style="left:160px;top:664px" width="16" height="16" viewBox="0 0 16 16"><path d="M3.200 .5h9.600q2.700 0 2.700 2.700v9.600q0 2.700-2.700 2.700h-9.600q-2.700 0-2.700-2.700v-9.600q0-2.700 2.700-2.700z" fill="none" stroke="#404040"/><path d="M5.800 7.500l4.200-3.800v7.600z" fill="#404040"/></svg>
<svg style="left:176px;top:664px" width="16" height="16" viewBox="0 0 16 16"><path d="M3.200 .5h9.600q2.700 0 2.700 2.700v9.600q0 2.700-2.700 2.700h-9.600q-2.700 0-2.700-2.700v-9.600q0-2.700 2.700-2.700z" fill="none" stroke="#404040"/><path d="M10.200 7.500l-4.200-3.800v7.600z" fill="#404040"/></svg>
<svg style="left:192px;top:664px" width="16" height="16" viewBox="0 0 16 16"><path d="M3.200 .5h9.600q2.700 0 2.700 2.700v9.600q0 2.700-2.700 2.700h-9.600q-2.700 0-2.700-2.700v-9.600q0-2.700 2.700-2.700z" fill="none" stroke="#404040"/><path d="M9.200 7.500l-4.200-3.800v7.600z" fill="#404040"/><path d="M10.500 4v7" stroke="#404040"/></svg>
<svg style="left:212px;top:664px" width="16" height="16" viewBox="0 0 16 16"><path d="M3.200 .5h9.600q2.700 0 2.700 2.700v9.600q0 2.700-2.700 2.700h-9.600q-2.700 0-2.700-2.700v-9.600q0-2.700 2.700-2.700z" fill="none" stroke="#404040"/><path d="M4.500 8.800l3 3 5-5.800" fill="none" stroke="#404040" stroke-width="2"/></svg>
<div style="left:13px;top:683px;width:38px;height:16px;background:#d4d0c8;"></div>
<div style="left:52px;top:683px;width:20px;height:16px;background:#d4d0c8;"></div>
<div style="left:73px;top:683px;width:12px;height:16px;background:#d4d0c8;"></div>
<div style="left:86px;top:683px;width:84px;height:16px;background:#d4d0c8;"></div>
<div style="left:171px;top:683px;width:264px;height:16px;background:#d4d0c8;"></div>
<div style="left:436px;top:683px;width:160px;height:16px;background:#d4d0c8;"></div>
<div style="left:597px;top:683px;width:107px;height:16px;background:#d4d0c8;"></div>
<div style="left:705px;top:683px;width:101px;height:16px;background:#d4d0c8;"></div>
<svg style="left:90.5px;top:684.5px" width="10" height="13" viewBox="0 0 10 13"><path d="M.5 5.500l4.500-5 4.500 5zM.5 7.500l4.500 5 4.500-5z" fill="#f8f8f4" stroke="#404040" stroke-width="1"/></svg>
<svg style="left:175.5px;top:684.5px" width="10" height="13" viewBox="0 0 10 13"><path d="M.5 5.500l4.500-5 4.500 5zM.5 7.500l4.500 5 4.500-5z" fill="#f8f8f4" stroke="#404040" stroke-width="1"/></svg>
<svg style="left:440.5px;top:684.5px" width="10" height="13" viewBox="0 0 10 13"><path d="M.5 5.500l4.500-5 4.500 5zM.5 7.500l4.500 5 4.500-5z" fill="#f8f8f4" stroke="#404040" stroke-width="1"/></svg>
<svg style="left:600.5px;top:684.5px" width="10" height="13" viewBox="0 0 10 13"><path d="M.5 5.500l4.500-5 4.500 5zM.5 7.500l4.500 5 4.500-5z" fill="#f8f8f4" stroke="#404040" stroke-width="1"/></svg>
<svg style="left:709px;top:684.5px" width="10" height="13" viewBox="0 0 10 13"><path d="M.5 5.500l4.500-5 4.500 5zM.5 7.500l4.500 5 4.500-5z" fill="#f8f8f4" stroke="#404040" stroke-width="1"/></svg>
<div class="t" style="top:684px;font-size:13px;line-height:15px;left:107px;letter-spacing:0.1px;">Position</div>
<div class="t" style="top:684px;font-size:13px;line-height:15px;left:217px;letter-spacing:-0.1px;">Bezeichnung</div>
<div class="t" style="top:684px;font-size:13px;line-height:15px;left:482px;letter-spacing:-0.1px;">Anzahl</div>
<div class="t" style="top:684px;font-size:13px;line-height:15px;left:613px;letter-spacing:-0.1px;">Externer Betrag</div>
<div class="t" style="top:684px;font-size:13px;line-height:15px;left:721px;letter-spacing:-0.1px;">Interner Betrag</div>
<div style="left:13px;top:700px;width:38px;height:22px;background:#f6f6ee;"></div>
<div style="left:52px;top:700px;width:20px;height:22px;background:#f6f6ee;"></div>
<div style="left:73px;top:700px;width:12px;height:22px;background:#f6f6ee;"></div>
<div style="left:86px;top:700px;width:84px;height:22px;background:#f6f6ee;"></div>
<div style="left:171px;top:700px;width:264px;height:22px;background:#f6f6ee;"></div>
<div style="left:436px;top:700px;width:160px;height:22px;background:#f6f6ee;"></div>
<div style="left:597px;top:700px;width:107px;height:22px;background:#f6f6ee;"></div>
<div style="left:705px;top:700px;width:101px;height:22px;background:#f6f6ee;"></div>
<svg style="left:15px;top:700px" width="13" height="16" viewBox="0 0 13 16"><rect x="1.500" y="1.500" width="11" height="14" fill="#a8a8a0"/><rect x=".5" y=".5" width="11" height="14" fill="#ffffd8" stroke="#26261c"/><rect x="2" y="2.500" width="2.500" height="1.200" fill="#a8a8a0"/><rect x="7.500" y="2.500" width="2" height="1.200" fill="#808498"/><rect x="1.500" y="5" width="9" height="5" fill="#c8e4f0"/><rect x="1.500" y="6.500" width="9" height="2" fill="#f01010"/><rect x="5" y="11.500" width="4.500" height="1.200" fill="#8c8c80"/></svg>
<div class="t" style="top:701px;font-size:13px;line-height:15px;left:36px;">1</div>
<div style="left:56px;top:704px;width:13px;height:13px;border:1px solid;border-color:#808080 #fff #fff #808080;background:#fff;"></div>
<div style="left:57px;top:705px;width:11px;height:11px;border:1px solid;border-color:#404040 #d4d0c8 #d4d0c8 #404040;"></div>
<div style="left:86px;top:701px;width:84px;height:20px;border:1px solid #7c8fa3;background:#ebebeb;"></div>
<div class="t" style="top:704px;font-size:13px;line-height:15px;left:88px;letter-spacing:-0.2px;">116-1</div>
<div style="left:171px;top:701px;width:264px;height:20px;border:1px solid #7c8fa3;background:#fff;"></div>
<div class="t" style="top:704px;font-size:13px;line-height:15px;left:173px;letter-spacing:0.12px;">Arbeitspaket 92-1 Projektleitung</div>
<div style="left:436px;top:701px;width:66px;height:20px;border:1px solid #7c8fa3;background:#fff;"></div>
<div class="t" style="top:704px;font-size:13px;line-height:15px;right:319px;letter-spacing:-0.2px;">40:00</div>
<div class="t" style="top:704px;font-size:13px;line-height:15px;left:506px;">h</div>
<div style="left:513px;top:701px;width:66px;height:20px;border:1px solid #7c8fa3;background:#fff;"></div>
<div class="t" style="top:704px;font-size:13px;line-height:15px;right:242px;letter-spacing:-0.2px;">5</div>
<div class="t" style="top:704px;font-size:13px;line-height:15px;left:583px;">Pt</div>
<div style="left:597px;top:701px;width:96px;height:20px;border:1px solid #7c8fa3;background:#fff;"></div>
<div class="t" style="top:704px;font-size:13px;line-height:15px;right:128px;letter-spacing:-0.5px;">4.000,00</div>
<div style="left:705px;top:701px;width:96px;height:20px;border:1px solid #7c8fa3;background:#fff;"></div>
<div class="t" style="top:704px;font-size:13px;line-height:15px;right:20px;letter-spacing:-0.5px;">2.800,00</div>
<div style="left:13px;top:723px;width:38px;height:22px;background:#f6f6ee;"></div>
<div style="left:52px;top:723px;width:20px;height:22px;background:#f6f6ee;"></div>
<div style="left:73px;top:723px;width:12px;height:22px;background:#f6f6ee;"></div>
<div style="left:86px;top:723px;width:84px;height:22px;background:#f6f6ee;"></div>
<div style="left:171px;top:723px;width:264px;height:22px;background:#f6f6ee;"></div>
<div style="left:436px;top:723px;width:160px;height:22px;background:#f6f6ee;"></div>
<div style="left:597px;top:723px;width:107px;height:22px;background:#f6f6ee;"></div>
<div style="left:705px;top:723px;width:101px;height:22px;background:#f6f6ee;"></div>
<svg style="left:15px;top:723px" width="13" height="16" viewBox="0 0 13 16"><rect x="1.500" y="1.500" width="11" height="14" fill="#a8a8a0"/><rect x=".5" y=".5" width="11" height="14" fill="#ffffd8" stroke="#26261c"/><rect x="2" y="2.500" width="2.500" height="1.200" fill="#a8a8a0"/><rect x="7.500" y="2.500" width="2" height="1.200" fill="#808498"/><rect x="1.500" y="5" width="9" height="5" fill="#c8e4f0"/><rect x="1.500" y="6.500" width="9" height="2" fill="#f01010"/><rect x="5" y="11.500" width="4.500" height="1.200" fill="#8c8c80"/></svg>
<div class="t" style="top:724px;font-size:13px;line-height:15px;left:36px;">2</div>
<div style="left:56px;top:727px;width:13px;height:13px;border:1px solid;border-color:#808080 #fff #fff #808080;background:#fff;"></div>
<div style="left:57px;top:728px;width:11px;height:11px;border:1px solid;border-color:#404040 #d4d0c8 #d4d0c8 #404040;"></div>
<div style="left:86px;top:724px;width:84px;height:20px;border:1px solid #7c8fa3;background:#ebebeb;"></div>
<div class="t" style="top:727px;font-size:13px;line-height:15px;left:88px;letter-spacing:-0.2px;">116-2</div>
<div style="left:171px;top:724px;width:264px;height:20px;border:1px solid #7c8fa3;background:#fff;"></div>
<div class="t" style="top:727px;font-size:13px;line-height:15px;left:173px;letter-spacing:0.07px;">Arbeitspaket 92.1-1 Konzeption</div>
<div style="left:436px;top:724px;width:66px;height:20px;border:1px solid #7c8fa3;background:#fff;"></div>
<div class="t" style="top:727px;font-size:13px;line-height:15px;right:319px;letter-spacing:-0.2px;">24:00</div>
<div class="t" style="top:727px;font-size:13px;line-height:15px;left:506px;">h</div>
<div style="left:513px;top:724px;width:66px;height:20px;border:1px solid #7c8fa3;background:#fff;"></div>
<div class="t" style="top:727px;font-size:13px;line-height:15px;right:242px;letter-spacing:-0.2px;">3</div>
<div class="t" style="top:727px;font-size:13px;line-height:15px;left:583px;">Pt</div>
<div style="left:597px;top:724px;width:96px;height:20px;border:1px solid #7c8fa3;background:#fff;"></div>
<div class="t" style="top:727px;font-size:13px;line-height:15px;right:128px;letter-spacing:-0.5px;">2.400,00</div>
<div style="left:705px;top:724px;width:96px;height:20px;border:1px solid #7c8fa3;background:#fff;"></div>
<div class="t" style="top:727px;font-size:13px;line-height:15px;right:20px;letter-spacing:-0.5px;">1.200,00</div>
<div style="left:13px;top:746px;width:38px;height:22px;background:#f6f6ee;"></div>
<div style="left:52px;top:746px;width:20px;height:22px;background:#f6f6ee;"></div>
<div style="left:73px;top:746px;width:12px;height:22px;background:#f6f6ee;"></div>
<div style="left:86px;top:746px;width:84px;height:22px;background:#f6f6ee;"></div>
<div style="left:171px;top:746px;width:264px;height:22px;background:#f6f6ee;"></div>
<div style="left:436px;top:746px;width:160px;height:22px;background:#f6f6ee;"></div>
<div style="left:597px;top:746px;width:107px;height:22px;background:#f6f6ee;"></div>
<div style="left:705px;top:746px;width:101px;height:22px;background:#f6f6ee;"></div>
<svg style="left:15px;top:746px" width="13" height="16" viewBox="0 0 13 16"><rect x="1.500" y="1.500" width="11" height="14" fill="#a8a8a0"/><rect x=".5" y=".5" width="11" height="14" fill="#ffffd8" stroke="#26261c"/><rect x="2" y="2.500" width="2.500" height="1.200" fill="#a8a8a0"/><rect x="7.500" y="2.500" width="2" height="1.200" fill="#808498"/><rect x="1.500" y="5" width="9" height="5" fill="#c8e4f0"/><rect x="1.500" y="6.500" width="9" height="2" fill="#f01010"/><rect x="5" y="11.500" width="4.500" height="1.200" fill="#8c8c80"/></svg>
<div class="t" style="top:747px;font-size:13px;line-height:15px;left:36px;">3</div>
<div style="left:56px;top:750px;width:13px;height:13px;border:1px solid;border-color:#808080 #fff #fff #808080;background:#fff;"></div>
<div style="left:57px;top:751px;width:11px;height:11px;border:1px solid;border-color:#404040 #d4d0c8 #d4d0c8 #404040;"></div>
<div style="left:86px;top:747px;width:84px;height:20px;border:1px solid #7c8fa3;background:#ebebeb;"></div>
<div class="t" style="top:750px;font-size:13px;line-height:15px;left:88px;letter-spacing:-0.2px;">116-3</div>
<div style="left:171px;top:747px;width:264px;height:20px;border:1px solid #7c8fa3;background:#fff;"></div>
<div class="t" style="top:750px;font-size:13px;line-height:15px;left:173px;letter-spacing:0.12px;">Arbeitspaket 92.1-2 Spezifikation</div>
<div style="left:436px;top:747px;width:66px;height:20px;border:1px solid #7c8fa3;background:#fff;"></div>
<div class="t" style="top:750px;font-size:13px;line-height:15px;right:319px;letter-spacing:-0.2px;">40:00</div>
<div class="t" style="top:750px;font-size:13px;line-height:15px;left:506px;">h</div>
<div style="left:513px;top:747px;width:66px;height:20px;border:1px solid #7c8fa3;background:#fff;"></div>
<div class="t" style="top:750px;font-size:13px;line-height:15px;right:242px;letter-spacing:-0.2px;">5</div>
<div class="t" style="top:750px;font-size:13px;line-height:15px;left:583px;">Pt</div>
<div style="left:597px;top:747px;width:96px;height:20px;border:1px solid #7c8fa3;background:#fff;"></div>
<div class="t" style="top:750px;font-size:13px;line-height:15px;right:128px;letter-spacing:-0.5px;">4.000,00</div>
<div style="left:705px;top:747px;width:96px;height:20px;border:1px solid #7c8fa3;background:#fff;"></div>
<div class="t" style="top:750px;font-size:13px;line-height:15px;right:20px;letter-spacing:-0.5px;">2.240,00</div>
<div style="left:13px;top:769px;width:38px;height:22px;background:#f6f6ee;"></div>
<div style="left:52px;top:769px;width:20px;height:22px;background:#f6f6ee;"></div>
<div style="left:73px;top:769px;width:12px;height:22px;background:#f6f6ee;"></div>
<div style="left:86px;top:769px;width:84px;height:22px;background:#f6f6ee;"></div>
<div style="left:171px;top:769px;width:264px;height:22px;background:#f6f6ee;"></div>
<div style="left:436px;top:769px;width:160px;height:22px;background:#f6f6ee;"></div>
<div style="left:597px;top:769px;width:107px;height:22px;background:#f6f6ee;"></div>
<div style="left:705px;top:769px;width:101px;height:22px;background:#f6f6ee;"></div>
<svg style="left:15px;top:769px" width="13" height="16" viewBox="0 0 13 16"><rect x="1.500" y="1.500" width="11" height="14" fill="#a8a8a0"/><rect x=".5" y=".5" width="11" height="14" fill="#ffffd8" stroke="#26261c"/><rect x="2" y="2.500" width="2.500" height="1.200" fill="#a8a8a0"/><rect x="7.500" y="2.500" width="2" height="1.200" fill="#808498"/><rect x="1.500" y="5" width="9" height="5" fill="#c8e4f0"/><rect x="1.500" y="6.500" width="9" height="2" fill="#f01010"/><rect x="5" y="11.500" width="4.500" height="1.200" fill="#8c8c80"/></svg>
<div class="t" style="top:770px;font-size:13px;line-height:15px;left:36px;">4</div>
<div style="left:56px;top:773px;width:13px;height:13px;border:1px solid;border-color:#808080 #fff #fff #808080;background:#fff;"></div>
<div style="left:57px;top:774px;width:11px;height:11px;border:1px solid;border-color:#404040 #d4d0c8 #d4d0c8 #404040;"></div>
<div style="left:86px;top:770px;width:84px;height:20px;border:1px solid #7c8fa3;background:#ebebeb;"></div>
<div class="t" style="top:773px;font-size:13px;line-height:15px;left:88px;letter-spacing:-0.2px;">116-4</div>
<div style="left:171px;top:770px;width:264px;height:20px;border:1px solid #7c8fa3;background:#fff;"></div>
<div class="t" style="top:773px;font-size:13px;line-height:15px;left:173px;letter-spacing:0.03px;">Arbeitspaket 92.1-3 Pflichtenheft</div>
<div style="left:436px;top:770px;width:66px;height:20px;border:1px solid #7c8fa3;background:#fff;"></div>
<div class="t" style="top:773px;font-size:13px;line-height:15px;right:319px;letter-spacing:-0.2px;">32:00</div>
<div class="t" style="top:773px;font-size:13px;line-height:15px;left:506px;">h</div>
<div style="left:513px;top:770px;width:66px;height:20px;border:1px solid #7c8fa3;background:#fff;"></div>
<div class="t" style="top:773px;font-size:13px;line-height:15px;right:242px;letter-spacing:-0.2px;">4</div>
<div class="t" style="top:773px;font-size:13px;line-height:15px;left:583px;">Pt</div>
<div style="left:597px;top:770px;width:96px;height:20px;border:1px solid #7c8fa3;background:#fff;"></div>
<div class="t" style="top:773px;font-size:13px;line-height:15px;right:128px;letter-spacing:-0.5px;">3.200,00</div>
<div style="left:705px;top:770px;width:96px;height:20px;border:1px solid #7c8fa3;background:#fff;"></div>
<div class="t" style="top:773px;font-size:13px;line-height:15px;right:20px;letter-spacing:-0.5px;">1.760,00</div>
<div style="left:0px;top:789px;width:819px;height:2px;background:#fff;"></div>
<div style="left:0px;top:789px;width:819px;height:1px;background:#ececec;"></div>
<svg style="left:286px;top:294px" width="13" height="21" viewBox="0 0 13 21"><path d="M.5 .5v16l3.700-3.600 2.900 6.800 2.300-1-2.900-6.600h5.200z" fill="#fff" stroke="#000" stroke-width="1"/></svg>
</div></body></html>
